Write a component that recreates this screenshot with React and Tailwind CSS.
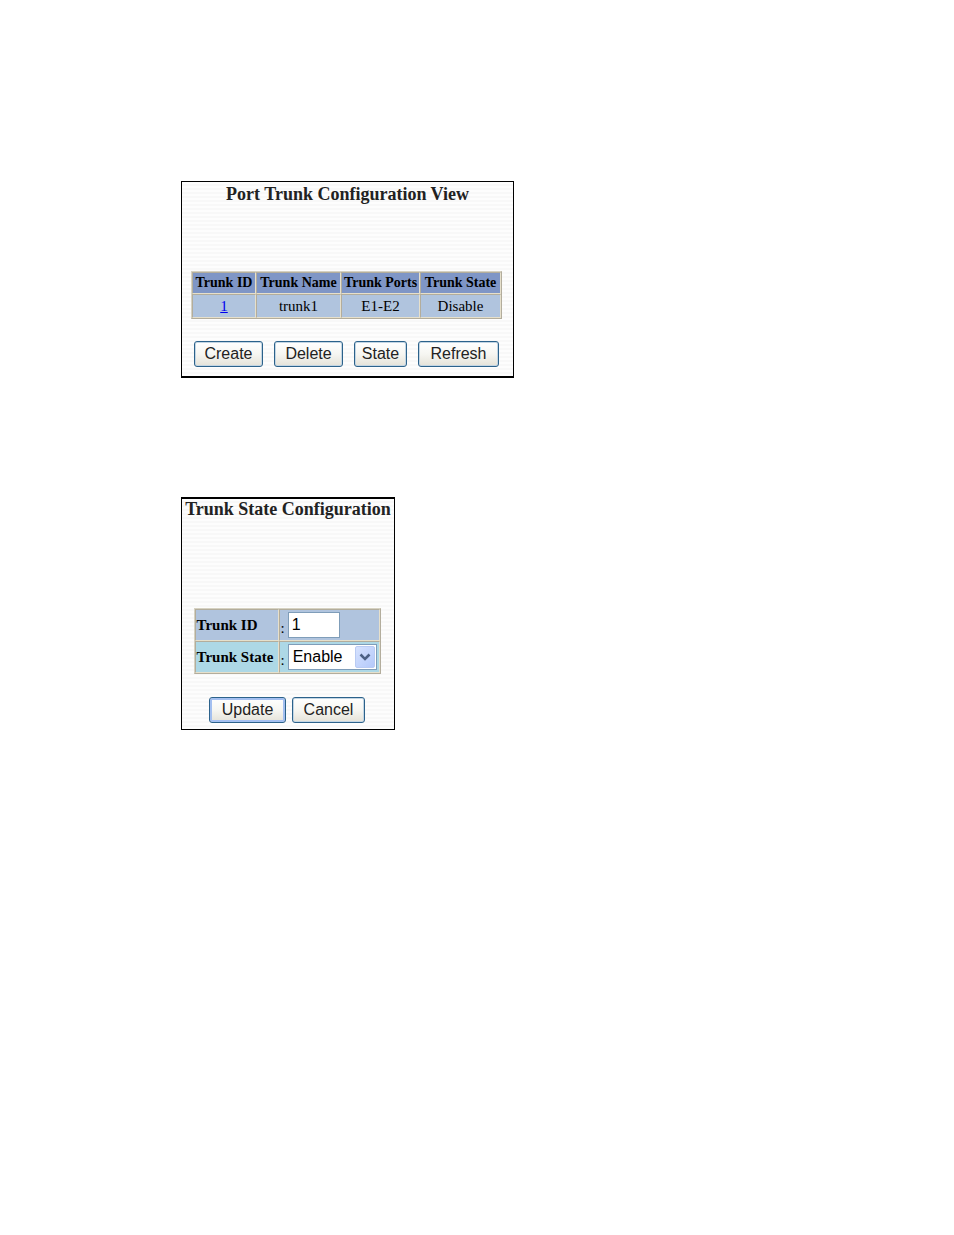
const STRIPES =
  'bg-[repeating-linear-gradient(to_bottom,#fdfdfd_0px,#fdfdfd_2px,#f8f8f8_2px,#f8f8f8_4px)]';
const TABLE =
  'border-separate border-spacing-0 border border-t-[#d6d2c2] border-l-[#d6d2c2] border-r-[#b3ad9c] border-b-[#b3ad9c] leading-5 whitespace-nowrap text-black';
const CELL =
  'border border-t-[#b3ad9c] border-l-[#b3ad9c] border-r-[#e6e0cc] border-b-[#e6e0cc]';

function XpButton({ children, className = '', focused = false }) {
  return (
    <button
      type="button"
      className={`h-[26px] rounded-[3px] border border-[#2c628b] bg-linear-to-b from-white via-[#f6f6f2] to-[#e4e2d8] font-['Liberation_Sans',sans-serif] text-base leading-6 text-[#222] ${
        focused ? 'shadow-[inset_0_0_0_2px_#a3bff0]' : 'shadow-[inset_0_0_0_1px_#c3d5e3]'
      } ${className}`}
    >
      {children}
    </button>
  );
}

const trunks = [{ id: '1', name: 'trunk1', ports: 'E1-E2', state: 'Disable' }];

function TrunkView() {
  return (
    <section className={`flex flex-col items-center border border-b-2 border-black pb-[9px] ${STRIPES}`}>
      <h1 className="text-lg leading-6 font-bold text-[#222]">Port Trunk Configuration View</h1>
      <div className="mt-[65px] flex flex-col pl-px pr-[3px]">
        <table className={TABLE}>
          <thead className="text-sm leading-5">
            <tr className="bg-[#7f96c6]">
              <th className={`${CELL} h-[22px] w-16`}>Trunk ID</th>
              <th className={`${CELL} w-[85px]`}>Trunk Name</th>
              <th className={`${CELL} w-[79px]`}>Trunk Ports</th>
              <th className={`${CELL} w-[81px]`}>Trunk State</th>
            </tr>
          </thead>
          <tbody className="text-[15px] leading-5">
            {trunks.map((t) => (
              <tr key={t.id} className="bg-[#b0c4de] text-center">
                <td className={`${CELL} h-6`}>
                  <a href="#trunk-state" className="text-[#0000ee] underline">{t.id}</a>
                </td>
                <td className={CELL}>{t.name}</td>
                <td className={CELL}>{t.ports}</td>
                <td className={CELL}>{t.state}</td>
              </tr>
            ))}
          </tbody>
        </table>
        <div className="mt-[22px] flex gap-[11px] pl-[3px]">
          <XpButton className="w-[69px]">Create</XpButton>
          <XpButton className="w-[69px]">Delete</XpButton>
          <XpButton className="w-[53px]">State</XpButton>
          <XpButton className="w-[81px]">Refresh</XpButton>
        </div>
      </div>
    </section>
  );
}

function TrunkStateForm() {
  return (
    <section
      id="trunk-state"
      className={`flex flex-col items-center border border-t-2 border-black pb-[6px] ${STRIPES}`}
    >
      <h2 className="text-lg leading-5 font-bold whitespace-nowrap text-[#222]">
        Trunk State Configuration
      </h2>
      <div className="mt-[89px] flex flex-col items-center pr-[2px]">
        <table className={`${TABLE} text-[15px]`}>
          <tbody>
            <tr className="bg-[#b0c4de]">
              <th className={`${CELL} h-8 w-[84px] pl-px text-left`}>
                <label htmlFor="trunk-id">Trunk ID</label>
              </th>
              <td className={`${CELL} w-[101px]`}>
                <div className="flex items-end gap-[3px] pl-px">
                  <span>:</span>
                  <input
                    id="trunk-id"
                    defaultValue="1"
                    className="h-[26px] w-[52px] border border-[#7f9db9] bg-white px-[3px] font-['Liberation_Sans',sans-serif] text-base text-black"
                  />
                </div>
              </td>
            </tr>
            <tr className="bg-[#add8e6]">
              <th className={`${CELL} h-8 pl-px text-left`}>
                <label htmlFor="state">Trunk State</label>
              </th>
              <td className={CELL}>
                <div className="flex items-end gap-[3px] pl-px">
                  <span>:</span>
                  <div className="relative">
                    <select
                      id="state"
                      defaultValue="Enable"
                      className="block h-[26px] w-[89px] appearance-none border border-[#7f9db9] bg-white pl-1 font-['Liberation_Sans',sans-serif] text-base leading-6 text-black"
                    >
                      <option>Enable</option>
                      <option>Disable</option>
                    </select>
                    <span className="pointer-events-none absolute inset-y-[2px] right-[2px] flex w-5 items-center justify-center rounded-[2px] border border-[#b9cbf3] bg-linear-to-br from-[#d6e2fe] to-[#b4c9fa]">
                      <svg width="12" height="8" viewBox="0 0 12 8" fill="none" stroke="#4d6185" strokeWidth="2.6">
                        <path d="M1.5 1.5 6 6l4.500-4.500" />
                      </svg>
                    </span>
                  </div>
                </div>
              </td>
            </tr>
          </tbody>
        </table>
        <div className="mt-[23px] flex gap-[6px]">
          <XpButton focused className="w-[77px]">Update</XpButton>
          <XpButton className="w-[73px]">Cancel</XpButton>
        </div>
      </div>
    </section>
  );
}

export default function App() {
  return (
    <main className="flex min-h-screen flex-col items-start gap-[119px] bg-white pt-[181px] pb-10 pl-[181px] font-['Liberation_Serif',serif]">
      <div className="w-[333px]">
        <TrunkView />
      </div>
      <div className="w-[214px]">
        <TrunkStateForm />
      </div>
    </main>
  );
}
